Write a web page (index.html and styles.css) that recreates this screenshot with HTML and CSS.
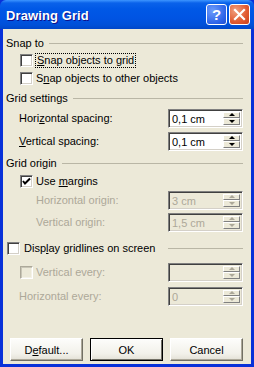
FILE: index.html
```html
<!DOCTYPE html>
<html lang="en">
<head>
    <meta charset="UTF-8">
    <title>Drawing Grid</title>
    <link rel="stylesheet" href="styles.css">
</head>
<body>

<div class="window">
    <div class="titlebar">
        <span class="title">Drawing Grid</span>
        <span class="tbtn help">?</span>
        <span class="tbtn close">
            <svg width="13" height="13" viewBox="0 0 13 13"><path d="M2 2 L11 11 M11 2 L2 11" stroke="#fff" stroke-width="2.2" stroke-linecap="square"/></svg>
        </span>
    </div>

    <div class="content">
        <!-- Snap to -->
        <div class="group g-snap"><span>Snap to</span><i class="rule"></i></div>
        <div class="row check ind1 r-cb1">
            <span class="box"></span>
            <span class="focus"><u>S</u>nap objects to grid</span>
        </div>
        <div class="row check ind1 r-cb2">
            <span class="box"></span>
            <span class="lbl">S<u>n</u>ap objects to other objects</span>
        </div>

        <!-- Grid settings -->
        <div class="group g-settings"><span>Grid settings</span><i class="rule"></i></div>
        <div class="row field ind1 r-hspace">
            <span class="lbl">Hori<u>z</u>ontal spacing:</span>
            <div class="spin"><span class="val">0,1 cm</span><span class="arrows"><b class="up"></b><b class="down"></b></span></div>
        </div>
        <div class="row field ind1 r-vspace">
            <span class="lbl"><u>V</u>ertical spacing:</span>
            <div class="spin"><span class="val">0,1 cm</span><span class="arrows"><b class="up"></b><b class="down"></b></span></div>
        </div>

        <!-- Grid origin -->
        <div class="group g-origin"><span>Grid origin</span><i class="rule"></i></div>
        <div class="row check ind1 r-margins">
            <span class="box"><svg width="11" height="11" viewBox="0 0 11 11"><path d="M2 5 L4 7.5 L9 2.5" fill="none" stroke="#000" stroke-width="2"/></svg></span>
            <span class="lbl">Use <u>m</u>argins</span>
        </div>
        <div class="row field ind2 off r-horigin">
            <span class="lbl">Horizontal origin:</span>
            <div class="spin"><span class="val">3 cm</span><span class="arrows"><b class="up"></b><b class="down"></b></span></div>
        </div>
        <div class="row field ind2 off r-vorigin">
            <span class="lbl">Vertical origin:</span>
            <div class="spin"><span class="val">1,5 cm</span><span class="arrows"><b class="up"></b><b class="down"></b></span></div>
        </div>

        <!-- Display gridlines -->
        <div class="group check g-display">
            <span class="box"></span>
            <span class="lbl">Disp<u>l</u>ay gridlines on screen</span>
            <i class="rule"></i>
        </div>
        <div class="row field ind1 off r-vevery">
            <span class="check"><span class="box"></span><span class="lbl">Vertical every:</span></span>
            <div class="spin"><span class="val"></span><span class="arrows"><b class="up"></b><b class="down"></b></span></div>
        </div>
        <div class="row field ind0 off r-hevery">
            <span class="lbl">Horizontal every:</span>
            <div class="spin"><span class="val">0</span><span class="arrows"><b class="up"></b><b class="down"></b></span></div>
        </div>

        <div class="buttons">
            <span class="btn">D<u>e</u>fault...</span>
            <span class="btn default">OK</span>
            <span class="btn">Cancel</span>
        </div>
    </div>
</div>

</body>
</html>
```

FILE: styles.css
```css
* {
    box-sizing: border-box;
}

body {
    margin: 0;
    padding: 0;
    font-family: "Liberation Sans", Arial, sans-serif;
    font-size: 11px;
    color: #000;
}

.window {
    width: 254px;
    height: 367px;
    display: flex;
    flex-direction: column;
    background: #0831d9;
}

/* Title bar */
.titlebar {
    height: 29px;
    display: flex;
    align-items: center;
    padding: 0 4px 0 6px;
    border-radius: 6px 6px 0 0;
    background: linear-gradient(#3d95ff 0, #0a62ea 3px, #0058e6 9px, #0054e3 18px, #0050d8 25px, #0046c8 29px);
}

.title {
    flex: 1;
    color: #fff;
    font-weight: bold;
    font-size: 13px;
    text-shadow: 1px 1px #0f1089;
    letter-spacing: 0.1px;
    padding-top: 1px;
}

.tbtn {
    width: 21px;
    height: 21px;
    border: 1px solid #fff;
    border-radius: 3px;
    display: flex;
    align-items: center;
    justify-content: center;
    color: #fff;
    font-weight: bold;
    font-size: 15px;
    margin-left: 2px;
}

.help {
    background: radial-gradient(circle at 30% 30%, #6d9dfb, #2c62e8 70%, #1f4fd0);
}

.close {
    background: radial-gradient(circle at 30% 30%, #f0a080, #e15a30 60%, #c8401c);
}

/* Dialog body */
.content {
    flex: 1;
    margin: 0 3px 3px 3px;
    background: #ece9d8;
    display: flex;
    flex-direction: column;
    padding: 6px 8px 3px 3px;
}

.group {
    height: 16px;
    display: flex;
    align-items: center;
}

.rule {
    flex: 1;
    height: 0;
    border-top: 1px solid #b9b6a5;
    margin-left: 5px;
    margin-top: 1px;
}

.row {
    display: flex;
    align-items: center;
}

.check {
    display: flex;
    align-items: center;
    height: 16px;
}

.field {
    height: 20px;
    justify-content: space-between;
}

.ind0 { padding-left: 13px; }
.ind1 { padding-left: 13px; }
.ind2 { padding-left: 30px; }

.box {
    width: 13px;
    height: 13px;
    background: #fff;
    border: 1px solid;
    border-color: #808080 #fff #fff #808080;
    box-shadow: inset 1px 1px #404040, inset -1px -1px #d4d0c8;
    margin-right: 3px;
    display: flex;
    align-items: center;
    justify-content: center;
}

.ind1 .box,
.ind1 .check .box {
    margin-left: 1px;
}

.focus {
    outline: 1px dotted #000;
    padding: 0 1px;
    line-height: 13px;
}

u {
    text-decoration: underline;
    text-underline-offset: 1px;
}

/* Spin boxes */
.spin {
    width: 75px;
    height: 19px;
    background: #fff;
    border: 1px solid;
    border-color: #808080 #fff #fff #808080;
    box-shadow: inset 1px 1px #404040, inset -1px -1px #d4d0c8;
    display: flex;
    padding: 2px 2px 2px 3px;
}

.val {
    flex: 1;
    line-height: 14px;
    margin-left: 0;
}

.arrows {
    width: 17px;
    display: flex;
    flex-direction: column;
}

.arrows b {
    flex: 1;
    background: #ece9d8;
    border: 1px solid;
    border-color: #fff #808080 #808080 #fff;
    display: flex;
    align-items: center;
    justify-content: center;
}

.arrows b::after {
    content: "";
    border-left: 3px solid transparent;
    border-right: 3px solid transparent;
}

.up::after {
    border-bottom: 3px solid #000;
}

.down::after {
    border-top: 3px solid #000;
}

/* Disabled rows */
.off .lbl {
    color: #aca899;
}

.off .spin {
    background: #ece9d8;
}

.off .val {
    color: #aca899;
}

.off .up::after {
    border-bottom-color: #aca899;
}

.off .down::after {
    border-top-color: #aca899;
}

.off .box {
    background: #ece9d8;
    border-color: #aca899 #fff #fff #aca899;
    box-shadow: inset 1px 1px #c8c5b6, inset -1px -1px #f4f2e8;
}

/* Vertical positions */
.r-cb1 { margin-top: 1px; }
.r-cb2 { margin-top: 2px; }
.g-settings { margin-top: 4px; }
.r-hspace { margin-top: 2px; }
.r-vspace { margin-top: 3px; }
.g-origin { margin-top: 4px; }
.r-margins { margin-top: 2px; }
.r-horigin { margin-top: 1px; }
.r-vorigin { margin-top: 2px; }
.g-display { margin-top: 8px; padding-left: 1px; }
.g-display .box { margin-right: 4px; }
.g-display .rule { margin-left: 13px; }
.r-vevery { margin-top: 6px; }
.r-hevery { margin-top: 4px; }

/* Buttons */
.buttons {
    margin-top: auto;
    display: flex;
    justify-content: space-between;
    padding-left: 4px;
    margin-bottom: 0;
}

.btn {
    width: 73px;
    height: 23px;
    display: flex;
    align-items: center;
    justify-content: center;
    background: linear-gradient(#fdfdfb, #f2f1ea 70%, #e3e1d6);
    border: 1px solid;
    border-color: #fff #716f64 #716f64 #fff;
    box-shadow: inset -1px -1px #aca899;
}

.btn.default {
    border-color: #000;
    box-shadow: inset 1px 1px #fff, inset -1px -1px #716f64;
}
```
